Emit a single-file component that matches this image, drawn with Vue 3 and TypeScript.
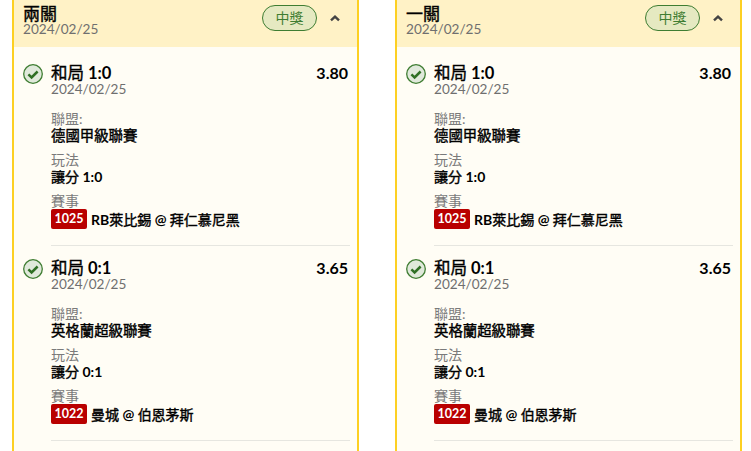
<script setup lang="ts">
interface Leg { pick: string; odds: string; league: string; play: string; code: string; match: string }
interface Card { title: string; legs: Leg[] }
interface Part { text: string; cjk: boolean }
const date = '2024/02/25'
const legs: Leg[] = [
  { pick: '和局 1:0', odds: '3.80', league: '德國甲級聯賽', play: '讓分 1:0', code: '1025', match: 'RB萊比錫 @ 拜仁慕尼黑' },
  { pick: '和局 0:1', odds: '3.65', league: '英格蘭超級聯賽', play: '讓分 0:1', code: '1022', match: '曼城 @ 伯恩茅斯' },
]
const cards: Card[] = [
  { title: '兩關', legs },
  { title: '一關', legs },
]
const parts = (s: string): Part[] =>
  s.split(/([\u4e00-\u9fff]+)/).filter(Boolean).map((text) => ({ text, cjk: /[\u4e00-\u9fff]/.test(text) }))
</script>

<template>
  <div class="page">
    <section v-for="card in cards" :key="card.title" class="card">
      <header class="head">
        <div class="head-text">
          <div class="title"><span class="cjk">{{ card.title }}</span></div>
          <div class="date">{{ date }}</div>
        </div>
        <span class="pill">中獎</span>
        <svg class="chevron" width="12" height="8" viewBox="0 0 12 8" aria-hidden="true">
          <path d="M2 6.4 6 2.6l4 3.8" fill="none" stroke="#444" stroke-width="2.4" />
        </svg>
      </header>
      <div class="body">
        <article v-for="leg in card.legs" :key="leg.code" class="leg">
          <svg class="check" width="20" height="20" viewBox="0 0 20 20" aria-hidden="true">
            <circle cx="10" cy="10" r="9.3" fill="#e0e9db" stroke="#3f7d32" stroke-width="1.3" />
            <path d="M5.4 10.3l3.2 3.1 6-5.9" fill="none" stroke="#2f6f24" stroke-width="2.5" />
          </svg>
          <div class="leg-main">
            <div class="leg-top">
              <span class="pick"><span v-for="p in parts(leg.pick)" :key="p.text" :class="{ cjk: p.cjk }">{{ p.text }}</span></span>
              <span class="odds">{{ leg.odds }}</span>
            </div>
            <div class="date">{{ date }}</div>
            <div class="label first">聯盟:</div>
            <div class="value league"><span v-for="p in parts(leg.league)" :key="p.text" :class="{ cjk: p.cjk }">{{ p.text }}</span></div>
            <div class="label">玩法</div>
            <div class="value"><span v-for="p in parts(leg.play)" :key="p.text" :class="{ cjk: p.cjk }">{{ p.text }}</span></div>
            <div class="label">賽事</div>
            <div class="match">
              <span class="code">{{ leg.code }}</span>
              <span class="value"><span v-for="p in parts(leg.match)" :key="p.text" :class="{ cjk: p.cjk }">{{ p.text }}</span></span>
            </div>
          </div>
        </article>
      </div>
    </section>
  </div>
</template>

<style>
html, body { margin: 0; background: #fff; overflow: hidden; }
</style>

<style scoped>
.page {
  display: flex;
  gap: 36px;
  padding-left: 12px;
  height: 451px;
  overflow: hidden;
  font-family: Lato, "Noto Sans CJK JP", sans-serif;
  color: #000;
}
.card {
  box-sizing: border-box;
  width: 347px;
  flex: none;
  height: 451px;
  border-left: 2px solid #fdd023;
  border-right: 2px solid #fdd023;
  background: #fffdf5;
}
.head {
  display: flex;
  align-items: center;
  height: 47px;
  box-sizing: border-box;
  padding: 0 16px 0 9px;
  background: #fff2c6;
}
.head-text { flex: 1; margin-top: -7px; }
.title { font-size: 17px; font-weight: 700; line-height: 17px; }
.date { font-size: 13.6px; line-height: 14px; color: #6f6f6f; }
.pill {
  box-sizing: border-box;
  width: 55px;
  height: 26px;
  margin: -11px 12px 0 0;
  border: 1px solid #3f7d32;
  border-radius: 13px;
  background: #e5e9c1;
  color: #3f7d32;
  font-size: 14px;
  line-height: 24px;
  text-align: center;
}
.chevron { margin-top: -12px; }
.body { padding: 0 7px 0 9px; }
.leg { display: flex; gap: 8px; padding: 16px 0; height: 195px; box-sizing: border-box; }
.check { flex: none; margin-top: 1px; }
.leg-main {
  flex: 1;
  border-bottom: 1px solid #e6e6e0;
  height: 182px;
}
.leg-top { display: flex; justify-content: space-between; align-items: center; height: 19px; margin-right: 2px; }
.pick { font-size: 16.5px; font-weight: 700; line-height: 19px; margin-top: 2px; }
.odds { font-size: 16px; font-weight: 700; line-height: 19px; }
.label { font-size: 14px; line-height: 16px; color: #7a7a7a; margin-top: 8px; }
.label.first { margin-top: 15px; }
.value { font-size: 14px; font-weight: 700; line-height: 17px; }
.value.league { font-size: 14.4px; }
.cjk { font-weight: 400; -webkit-text-stroke: 0.4px #000; }
.match { display: flex; align-items: center; gap: 4px; height: 20px; }
.code {
  box-sizing: border-box;
  width: 36px;
  height: 20px;
  border-radius: 2px;
  background: #b90000;
  color: #fff;
  font-size: 12.5px;
  font-weight: 700;
  line-height: 20px;
  text-align: center;
}
</style>
